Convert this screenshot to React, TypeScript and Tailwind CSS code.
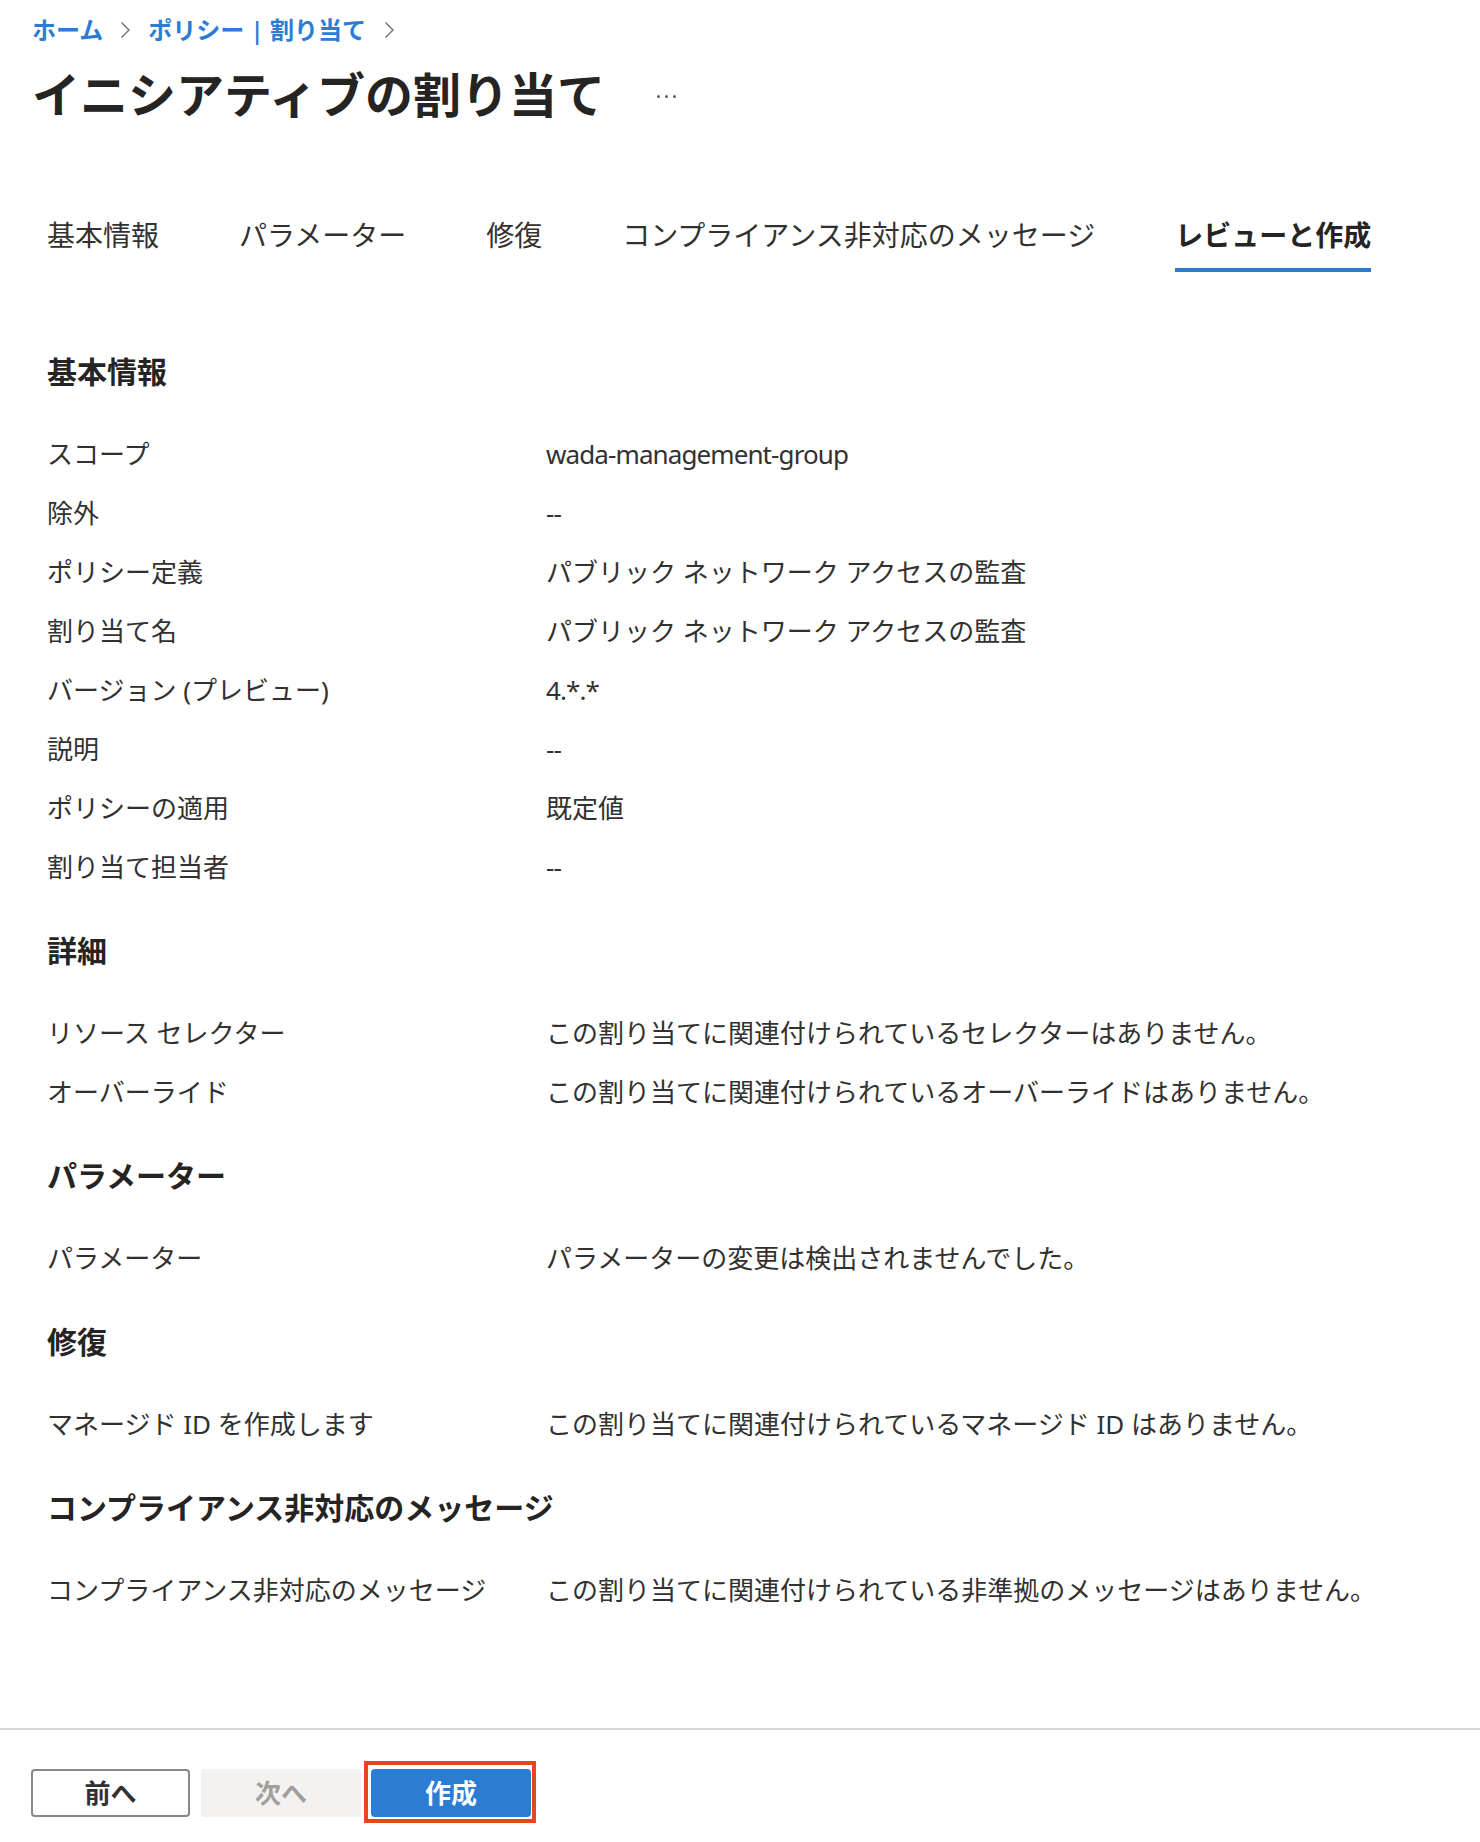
import React from "react";

const tabs = [
  { label: "基本情報", active: false },
  { label: "パラメーター", active: false },
  { label: "修復", active: false },
  { label: "コンプライアンス非対応のメッセージ", active: false },
  { label: "レビューと作成", active: true },
];

const sections: { title: string; rows: [string, string][] }[] = [
  {
    title: "基本情報",
    rows: [
      ["スコープ", "wada-management-group"],
      ["除外", "--"],
      ["ポリシー定義", "パブリック ネットワーク アクセスの監査"],
      ["割り当て名", "パブリック ネットワーク アクセスの監査"],
      ["バージョン (プレビュー)", "4.*.*"],
      ["説明", "--"],
      ["ポリシーの適用", "既定値"],
      ["割り当て担当者", "--"],
    ],
  },
  {
    title: "詳細",
    rows: [
      ["リソース セレクター", "この割り当てに関連付けられているセレクターはありません。"],
      ["オーバーライド", "この割り当てに関連付けられているオーバーライドはありません。"],
    ],
  },
  {
    title: "パラメーター",
    rows: [["パラメーター", "パラメーターの変更は検出されませんでした。"]],
  },
  {
    title: "修復",
    rows: [["マネージド ID を作成します", "この割り当てに関連付けられているマネージド ID はありません。"]],
  },
  {
    title: "コンプライアンス非対応のメッセージ",
    rows: [
      [
        "コンプライアンス非対応のメッセージ",
        "この割り当てに関連付けられている非準拠のメッセージはありません。",
      ],
    ],
  },
];

// latin-only values render a touch tighter in the original
const isAscii = (s: string) => /^[\x00-\x7f]+$/.test(s);

function Chevron() {
  return (
    <svg width="11" height="18" viewBox="0 0 11 18" fill="none" className="shrink-0">
      <path d="M1.5 1.5L9 9l-7.5 7.5" stroke="#707070" strokeWidth="1.4" />
    </svg>
  );
}

export default function App() {
  return (
    <div
      className="w-[1480px] bg-white text-[#323130]"
      style={{ fontFamily: '"Noto Sans", "Noto Sans CJK JP", sans-serif' }}
    >
      <div className="px-[32px]">
        {/* Breadcrumb */}
        <div className="pt-3 flex items-center h-[48px] leading-[36px] text-[24px] font-semibold text-[#2c7cd4]">
          <span>ホーム</span>
          <span className="mx-[17px] flex items-center">
            <Chevron />
          </span>
          <span>ポリシー | 割り当て</span>
          <span className="ml-[18px] flex items-center">
            <Chevron />
          </span>
        </div>

        {/* Title */}
        <div className="mt-[17px] flex items-center h-[60px]">
          <h1 className="text-[48px] leading-[60px] font-bold text-[#252423]">
            イニシアティブの割り当て
          </h1>
          <div className="ml-[52px] flex items-center gap-[5px] mt-[2px]">
            <span className="w-[3px] h-[3px] rounded-full bg-[#605e5c]" />
            <span className="w-[3px] h-[3px] rounded-full bg-[#605e5c]" />
            <span className="w-[3px] h-[3px] rounded-full bg-[#605e5c]" />
          </div>
        </div>

        {/* Tabs */}
        <div className="mt-[92px] pl-[15px] flex gap-20">
          {tabs.map((t) => (
            <div key={t.label} className="flex flex-col">
              <span
                className={
                  t.active
                    ? "text-[28px] leading-[36px] font-bold text-[#252423]"
                    : "text-[28px] leading-[36px] text-[#323130]"
                }
              >
                {t.label}
              </span>
              <span
                className={
                  t.active ? "mt-[15px] h-[4px] bg-[#2c7cd4]" : "mt-[15px] h-[4px] bg-transparent"
                }
              />
            </div>
          ))}
        </div>

        {/* Review sections */}
        <div className="mt-[70px] pl-[15px] flex flex-col gap-6">
          {sections.map((s) => (
            <div key={s.title} className="flex flex-col gap-6">
              <h2 className="h-[59px] flex items-center text-[30px] font-bold text-[#252423]">
                {s.title}
              </h2>
              <div className="flex flex-col">
                {s.rows.map(([label, value]) => (
                  <div key={label} className="h-[59px] flex items-center text-[26px]">
                    <span className="w-[499px] shrink-0">{label}</span>
                    <span className={isAscii(value) ? "tracking-[-0.9px]" : ""}>{value}</span>
                  </div>
                ))}
              </div>
            </div>
          ))}
        </div>
      </div>

      {/* Footer */}
      <div className="mt-[108px] border-t-2 border-[#d6d6d6] pt-[39px] pb-[25px] px-[31px] flex gap-[10px]">
        <button className="w-[159px] h-[48px] rounded-[4px] border-2 border-[#8a8886] bg-white text-[26px] font-bold text-[#323130] flex items-center justify-center">
          前へ
        </button>
        <button className="w-[160px] h-[48px] rounded-[4px] bg-[#f3f2f1] text-[26px] font-bold text-[#a19f9d] flex items-center justify-center ml-[1px]">
          次へ
        </button>
        <div className="relative">
          <button className="w-[160px] h-[48px] rounded-[4px] bg-[#2c7cd4] text-[26px] font-bold text-white flex items-center justify-center">
            作成
          </button>
          <span className="absolute -left-[7px] -right-[5px] -top-[8px] -bottom-[6px] border-4 border-[#e9461e] pointer-events-none" />
        </div>
      </div>
    </div>
  );
}
